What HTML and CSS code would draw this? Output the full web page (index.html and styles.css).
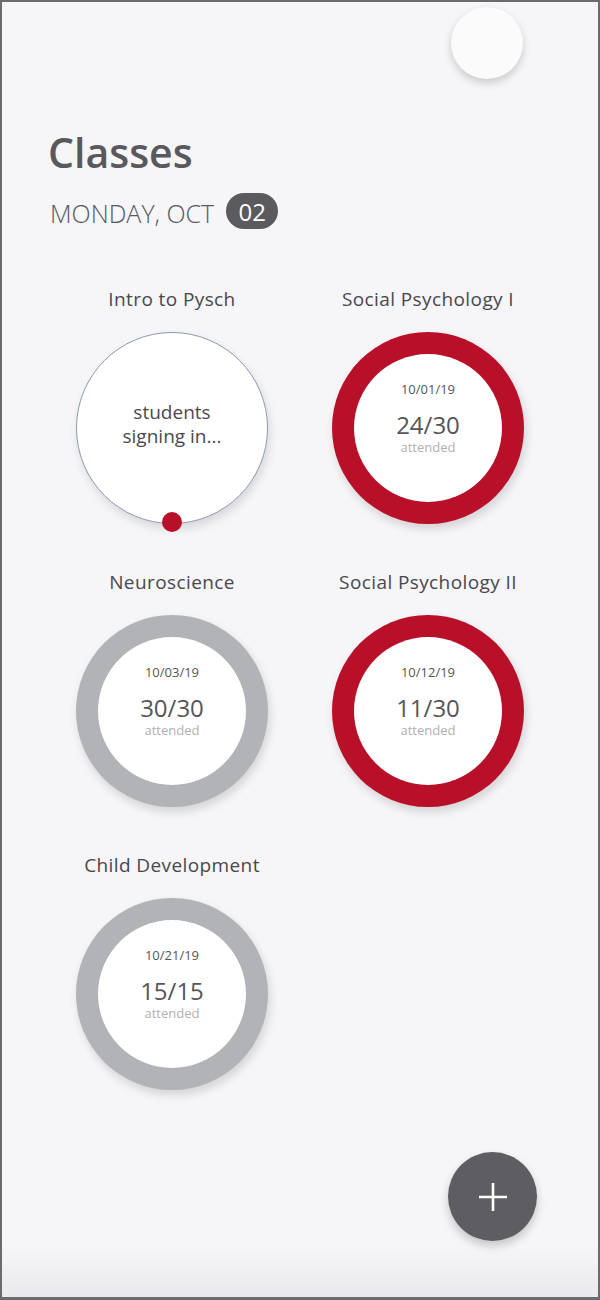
FILE: index.html
```html
<!DOCTYPE html>
<html lang="en">
<head>
  <meta charset="UTF-8" />
  <meta name="viewport" content="width=device-width, initial-scale=1.0"/>
  <title>Classes</title>

  <link rel="stylesheet" href="styles.css">
</head>

<body>
  <div class="screen">
    <div class="topbar">
      <div class="avatar"></div>
    </div>

    <h1>Classes</h1>
    <div class="date-row">
      <span class="date-label">MONDAY, OCT</span>
      <span class="date-badge">02</span>
    </div>

    <div class="class-grid">
      <div class="class-card">
        <h3 class="class-title">Intro to Pysch</h3>
        <div class="live-circle">
          <p class="live-text">students<br>signing in...</p>
          <span class="live-dot"></span>
        </div>
      </div>

      <div class="class-card">
        <h3 class="class-title">Social Psychology I</h3>
        <div class="ring ring-red">
          <div class="disc">
            <span class="disc-date">10/01/19</span>
            <span class="disc-count">24/30</span>
            <span class="disc-label">attended</span>
          </div>
        </div>
      </div>

      <div class="class-card">
        <h3 class="class-title">Neuroscience</h3>
        <div class="ring ring-gray">
          <div class="disc">
            <span class="disc-date">10/03/19</span>
            <span class="disc-count">30/30</span>
            <span class="disc-label">attended</span>
          </div>
        </div>
      </div>

      <div class="class-card">
        <h3 class="class-title">Social Psychology II</h3>
        <div class="ring ring-red">
          <div class="disc">
            <span class="disc-date">10/12/19</span>
            <span class="disc-count">11/30</span>
            <span class="disc-label">attended</span>
          </div>
        </div>
      </div>

      <div class="class-card">
        <h3 class="class-title">Child Development</h3>
        <div class="ring ring-gray">
          <div class="disc">
            <span class="disc-date">10/21/19</span>
            <span class="disc-count">15/15</span>
            <span class="disc-label">attended</span>
          </div>
        </div>
      </div>
    </div>

    <button class="fab" aria-label="Add class">
      <svg width="30" height="30" viewBox="0 0 30 30">
        <path d="M15 1v28M1 15h28" stroke="#fff" stroke-width="2.6" fill="none"/>
      </svg>
    </button>
  </div>
</body>
</html>
```

FILE: styles.css
```css
body {
  margin: 0;
  font-family: 'Open Sans', 'Noto Sans', sans-serif;
  color: #555559;
}

.screen {
  position: relative;
  width: 600px;
  height: 1300px;
  box-sizing: border-box;
  border: 2px solid #6b6b6d;
  border-bottom-width: 3px;
  background: #f6f5f8;
  overflow: hidden;
}

/* soft fade at the bottom edge */
.screen::after {
  content: '';
  position: absolute;
  left: 0;
  right: 0;
  bottom: 0;
  height: 50px;
  background: linear-gradient(180deg, rgba(232, 231, 235, 0) 0%, #e9e8ec 100%);
  pointer-events: none;
}

.topbar {
  display: flex;
  justify-content: flex-end;
  padding: 5px 75px 0 0;
}

.avatar {
  width: 72px;
  height: 72px;
  border-radius: 50%;
  background: #fbfbfc;
  box-shadow: 0 4px 8px rgba(0, 0, 0, 0.18);
}

h1 {
  margin: 49px 0 0 0;
  padding-left: 46px;
  font-size: 41px;
  line-height: 48px;
  font-weight: 600;
  color: #59595d;
}

.date-row {
  display: flex;
  align-items: center;
  gap: 12px;
  margin-top: 17px;
  padding-left: 48px;
  height: 36px;
}

.date-label {
  font-size: 25px;
  font-weight: 300;
  color: #59595d;
  padding-top: 3px;
}

.date-badge {
  display: inline-flex;
  align-items: center;
  justify-content: center;
  width: 52px;
  height: 36px;
  border-radius: 18px;
  background: #5b5b5f;
  color: #fff;
  font-size: 24px;
  font-weight: 400;
}

.class-grid {
  display: grid;
  grid-template-columns: 1fr 1fr;
  row-gap: 46px;
  margin-top: 58px;
  padding: 0 42px;
}

.class-card {
  display: flex;
  flex-direction: column;
  align-items: center;
}

.class-title {
  margin: 0 0 21px 0;
  font-size: 19px;
  line-height: 24px;
  font-weight: 400;
  letter-spacing: 0.4px;
  color: #48484c;
}

.live-circle {
  position: relative;
  width: 192px;
  height: 192px;
  box-sizing: border-box;
  border-radius: 50%;
  border: 1px solid #8f99b1;
  background: #fff;
  box-shadow: 2px 5px 10px rgba(0, 0, 0, 0.12);
  display: flex;
  align-items: center;
  justify-content: center;
}

.live-text {
  margin: 0 0 8px 0;
  font-size: 19px;
  line-height: 24px;
  text-align: center;
  color: #4a4a4e;
}

.live-dot {
  position: absolute;
  left: 50%;
  bottom: -9px;
  width: 20px;
  height: 20px;
  margin-left: -10px;
  border-radius: 50%;
  background: #b9102a;
}

.ring {
  width: 192px;
  height: 192px;
  box-sizing: border-box;
  padding: 22px;
  border-radius: 50%;
  box-shadow: 2px 5px 10px rgba(0, 0, 0, 0.14);
}

.ring-red {
  background: #b9102a;
}

.ring-gray {
  background: #b2b3b7;
}

.disc {
  width: 100%;
  height: 100%;
  border-radius: 50%;
  background: #fff;
  display: flex;
  flex-direction: column;
  align-items: center;
  padding-top: 26px;
  box-sizing: border-box;
}

.disc-date {
  font-size: 13px;
  line-height: 18px;
  color: #555559;
}

.disc-count {
  margin-top: 14px;
  font-size: 24px;
  line-height: 26px;
  color: #555559;
}

.disc-label {
  font-size: 13px;
  line-height: 18px;
  color: #b0b0b4;
}

.fab {
  position: absolute;
  right: 61px;
  bottom: 56px;
  z-index: 1;
  width: 89px;
  height: 89px;
  border: none;
  border-radius: 50%;
  background: #5e5e62;
  box-shadow: 0 5px 10px rgba(0, 0, 0, 0.2);
  display: flex;
  align-items: center;
  justify-content: center;
  padding: 0;
  cursor: pointer;
}
```
